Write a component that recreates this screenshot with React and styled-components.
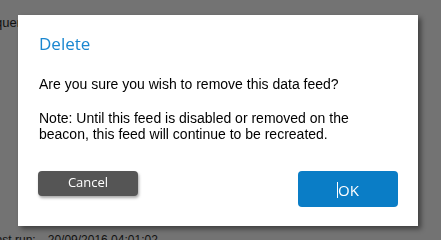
import styled, { createGlobalStyle } from 'styled-components';

const Global = createGlobalStyle`
  html, body {
    margin: 0;
    padding: 0;
    background: #737373;
    overflow: hidden;
  }
`;

const App = () => (
  <>
    <Global />
    <Page>
      <BackText>query</BackText>
      <Divider />
      <RunRow>
        <span>Last run:</span>
        <span>20/09/2016 04:01:02</span>
      </RunRow>
    </Page>

    <Dialog role="dialog">
      <Title>Delete</Title>
      <Body>
        <p>Are you sure you wish to remove this data feed?</p>
        <p>
          Note: Until this feed is disabled or removed on the beacon, this feed will continue to be
          recreated.
        </p>
      </Body>
      <Actions>
        <Button $variant="cancel">Cancel</Button>
        <Button $variant="ok">
          <Caret />
          OK
        </Button>
      </Actions>
    </Dialog>
  </>
);

export default App;

const Page = styled.div`
  width: 441px;
  height: 240px;
  display: flex;
  flex-direction: column;
  font-family: 'Liberation Sans', Arial, sans-serif;
  font-size: 13px;
  color: #111;
`;

const BackText = styled.div`
  padding: 15px 0 0 0;
  margin-left: -5px;
  line-height: 16px;
`;

const Divider = styled.div`
  margin-top: 180px;
  height: 1px;
  background: #888;
`;

const RunRow = styled.div`
  display: flex;
  gap: 12px;
  margin-top: 21px;
  margin-left: -11px;
  font-size: 12px;
  line-height: 16px;
`;

const Dialog = styled.div`
  position: fixed;
  left: 18px;
  top: 15px;
  width: 400px;
  height: 211px;
  box-sizing: border-box;
  background: #fff;
  box-shadow: 3px 3px 5px rgba(0, 0, 0, 0.45);
  padding: 18px 20px 0 20px;
  display: flex;
  flex-direction: column;
`;

const Title = styled.h2`
  margin: 0 0 0 1px;
  font-family: 'Open Sans', 'Liberation Sans', sans-serif;
  font-weight: 400;
  font-size: 17px;
  line-height: 22px;
  color: #1a87d0;
`;

const Body = styled.div`
  margin: 21px 0 0 1px;
  font-family: 'Liberation Sans', Arial, sans-serif;
  font-size: 14px;
  line-height: 16px;
  color: #000;

  p {
    margin: 0 0 18px 0;
  }
`;

const Actions = styled.div`
  display: flex;
  justify-content: space-between;
  align-items: flex-start;
  margin-top: 11px;
`;

const Button = styled.button`
  width: 100px;
  height: ${p => (p.$variant === 'ok' ? '36px' : '25px')};
  border: none;
  border-radius: 4px;
  background: ${p => (p.$variant === 'ok' ? '#0a7dc6' : '#555555')};
  color: #fff;
  font-family: 'Open Sans', 'Liberation Sans', sans-serif;
  font-size: ${p => (p.$variant === 'ok' ? '15px' : '13px')};
  padding: ${p => (p.$variant === 'ok' ? '2px 0 0 0' : '0 0 3px 0')};
  box-shadow: ${p => (p.$variant === 'ok' ? 'none' : '1px 2px 3px rgba(0, 0, 0, 0.35)')};
  display: flex;
  align-items: center;
  justify-content: center;
`;

const Caret = styled.span`
  display: inline-block;
  width: 1px;
  height: 16px;
  background: #fff;
`;
